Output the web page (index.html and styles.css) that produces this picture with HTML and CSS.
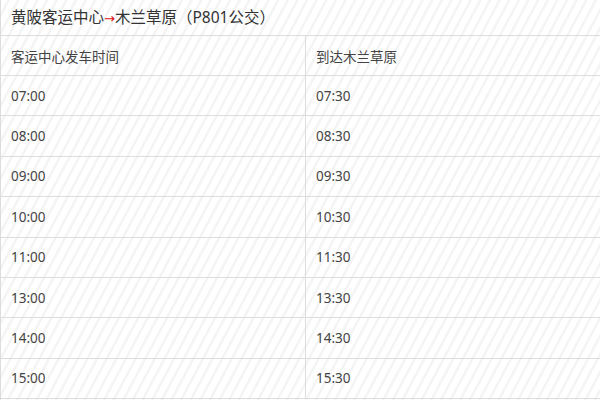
FILE: index.html
```html
<!DOCTYPE html>
<html lang="zh">
<head>
<meta charset="utf-8">
<link rel="stylesheet" href="styles.css">
</head>
<body>
<div class="page">
  <div class="title">黄陂客运中心<span class="arrow">→</span>木兰草原（P801公交）</div>
  <div class="table">
    <div class="row head"><div class="cell c1">客运中心发车时间</div><div class="cell c2">到达木兰草原</div></div>
    <div class="row"><div class="cell c1">07:00</div><div class="cell c2">07:30</div></div>
    <div class="row"><div class="cell c1">08:00</div><div class="cell c2">08:30</div></div>
    <div class="row"><div class="cell c1">09:00</div><div class="cell c2">09:30</div></div>
    <div class="row"><div class="cell c1">10:00</div><div class="cell c2">10:30</div></div>
    <div class="row"><div class="cell c1">11:00</div><div class="cell c2">11:30</div></div>
    <div class="row"><div class="cell c1">13:00</div><div class="cell c2">13:30</div></div>
    <div class="row"><div class="cell c1">14:00</div><div class="cell c2">14:30</div></div>
    <div class="row"><div class="cell c1">15:00</div><div class="cell c2">15:30</div></div>
  </div>
</div>
</body>
</html>
```
FILE: styles.css
```css
html, body {
  margin: 0;
  padding: 0;
  width: 600px;
  height: 400px;
  overflow: hidden;
}
body {
  font-family: "Noto Sans", "Noto Sans CJK SC", sans-serif;
  color: #444;
  background: #fff;
}
.page {
  width: 620px;
  height: 400px;
  border-left: 1px solid #ddd;
  background: repeating-linear-gradient(118deg, #fff 0px, #fff 5px, #f4f4f4 6px, #f4f4f4 7.5px, #fff 8.5px);
}
.title {
  height: 36px;
  box-sizing: border-box;
  padding-left: 10px;
  line-height: 34px;
  font-size: 15.5px;
  color: #333;
  border-bottom: 1px solid #ddd;
}
.arrow {
  color: #e01010;
  font-family: "DejaVu Sans", sans-serif;
  font-size: 13px;
}
.row {
  display: flex;
  height: 40.4px;
  box-sizing: border-box;
  border-bottom: 1px solid #ddd;
}
.row.head {
  height: 40px;
}
.cell {
  display: flex;
  align-items: center;
  padding-left: 10px;
  font-size: 13.5px;
  box-sizing: border-box;
}
.c1 {
  width: 305px;
  border-right: 1px solid #ddd;
}
.c2 {
  flex: 1;
}
```
